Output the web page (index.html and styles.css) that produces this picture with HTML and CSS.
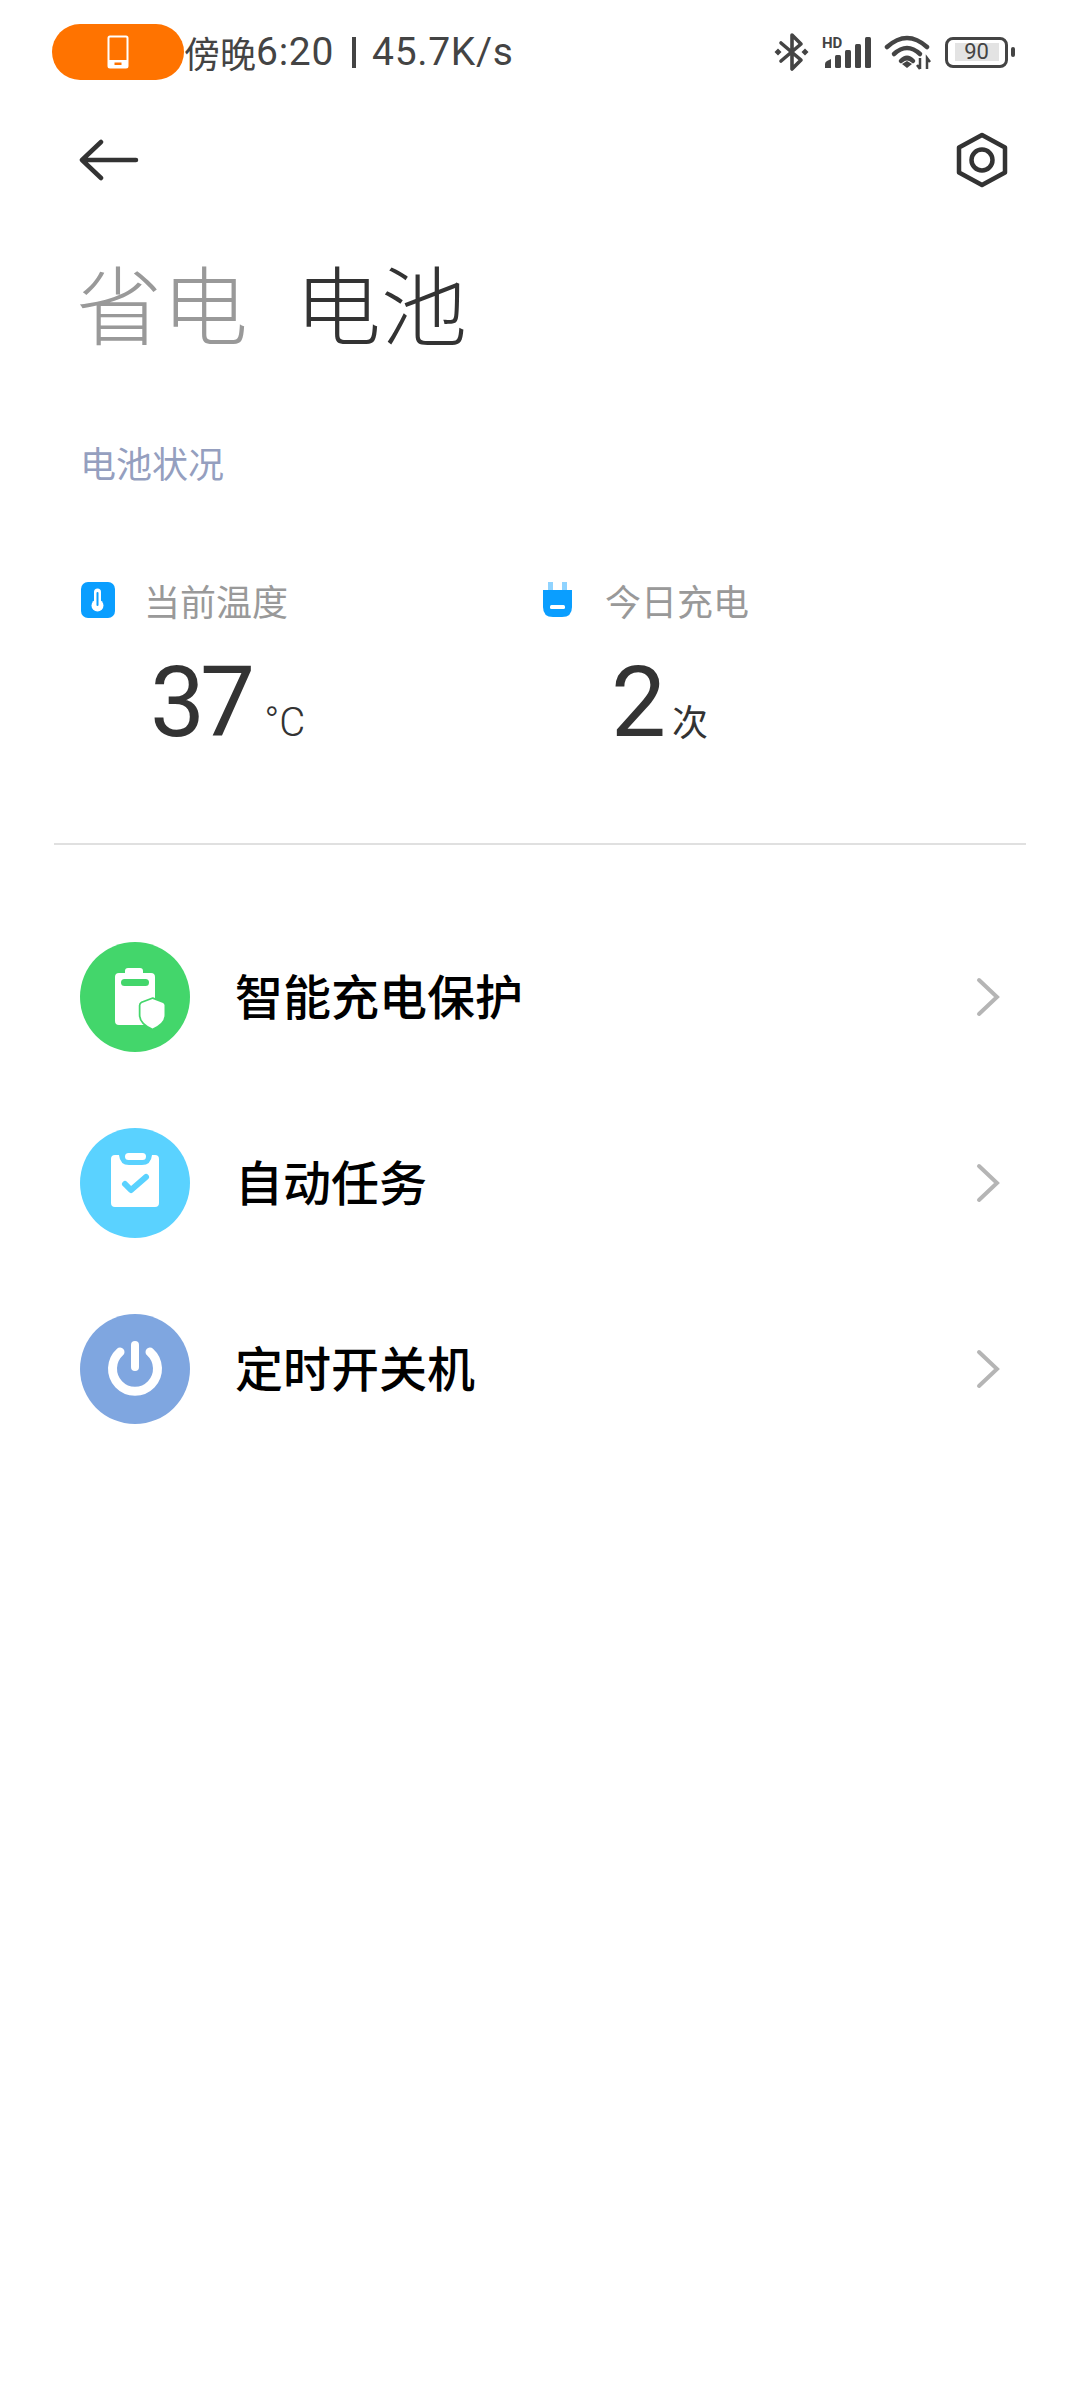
FILE: index.html
```html
<!DOCTYPE html>
<html lang="zh-CN">

<head>
    <meta charset="UTF-8">
    <meta name="viewport" content="width=device-width, initial-scale=1.0">
    <title>省电 电池</title>
    <link rel="stylesheet" href="styles.css">
</head>

<body>
    <div class="status-bar">
        <div class="call-pill">
            <svg width="22" height="34" viewBox="0 0 22 34">
                <rect x="1.5" y="1.5" width="19" height="31" rx="1.5" fill="none" stroke="#fff" stroke-width="2"/>
                <rect x="1.5" y="25" width="19" height="7.5" fill="#fff"/>
                <rect x="7.500" y="27.500" width="7" height="2.500" fill="#ff7300"/>
            </svg>
        </div>
        <div class="status-text">傍晚<span class="status-num">6:20</span><span class="status-sep"></span><span class="status-num">45.7K/s</span></div>
        <div class="status-icons">
            <svg class="icon-bt" width="36" height="40" viewBox="0 0 36 40">
                <path d="M7 11 L27 28 L18 37 V3 L27 12 L7 29" fill="none" stroke="#444" stroke-width="3.600" stroke-linejoin="round" stroke-linecap="round"/>
                <path d="M4 16.500 L7.500 20 L4 23.500 L0.500 20 Z M31 16.500 L34.500 20 L31 23.500 L27.500 20 Z" fill="#444"/>
            </svg>
            <svg class="icon-signal" width="50" height="34" viewBox="0 0 50 34">
                <text x="0" y="13" class="hd-text">HD</text>
                <path d="M3 33 V29 Q3 27 5 26 L9 24 V33 Z" fill="#444"/>
                <rect x="13" y="20" width="6" height="13" rx="1.500" fill="#444"/>
                <rect x="23" y="15" width="6" height="18" rx="1.500" fill="#444"/>
                <rect x="33" y="9" width="6" height="24" rx="1.500" fill="#444"/>
                <rect x="43" y="2" width="6" height="31" rx="1.500" fill="#444"/>
            </svg>
            <svg class="icon-wifi" width="47" height="36" viewBox="0 0 47 36">
                <path d="M3 13 Q23 -5 43 13" fill="none" stroke="#444" stroke-width="4.500" stroke-linecap="round"/>
                <path d="M10 20 Q23 8 36 20" fill="none" stroke="#444" stroke-width="4.500" stroke-linecap="round"/>
                <path d="M17 27 Q23 21 29 27" fill="none" stroke="#444" stroke-width="4.500" stroke-linecap="round"/>
                <path d="M18 30 L23 27 L28 30 L23 34 Z" fill="#444"/>
                <path d="M36 24 V35 M33 31 L36 35 M43 35 V24 L46 28" fill="none" stroke="#444" stroke-width="2.500"/>
            </svg>
            <div class="battery">
                <div class="battery-body"><span class="battery-level">90</span></div>
                <div class="battery-cap"></div>
            </div>
        </div>
    </div>

    <div class="nav">
        <svg width="60" height="42" viewBox="0 0 60 42">
            <path d="M22 3 L3 21 L22 39 M3 21 H57" fill="none" stroke="#333" stroke-width="4.500" stroke-linecap="round" stroke-linejoin="round"/>
        </svg>
        <svg width="52" height="56" viewBox="0 0 52 56">
            <path d="M26 3 L49 15.500 V40.500 L26 53 L3 40.500 V15.500 Z" fill="none" stroke="#333" stroke-width="4.500" stroke-linejoin="round"/>
            <circle cx="26" cy="28" r="10.500" fill="none" stroke="#333" stroke-width="4.500"/>
        </svg>
    </div>

    <div class="tabs">
        <span class="tab">省电</span>
        <span class="tab tab-active">电池</span>
    </div>

    <div class="section-title">电池状况</div>

    <div class="stats">
        <div class="stat">
            <div class="stat-head">
                <svg class="stat-icon" width="34" height="36" viewBox="0 0 34 36">
                    <rect width="34" height="36" rx="7" fill="#0a9eff"/>
                    <path d="M16.500 10 V22" stroke="#fff" stroke-width="7" stroke-linecap="round"/>
                    <circle cx="16.500" cy="23.500" r="6" fill="#fff"/>
                    <path d="M16.500 11 V23" stroke="#0a9eff" stroke-width="2" stroke-linecap="round"/>
                </svg>
                <span class="stat-label">当前温度</span>
            </div>
            <div class="stat-value"><span class="stat-num stat-num-tight">37</span><span class="stat-unit">°C</span></div>
        </div>
        <div class="stat">
            <div class="stat-head">
                <svg class="stat-icon" width="34" height="36" viewBox="0 0 34 36">
                    <path d="M6 0 H11 V9 H6 Z M20 0 H25 V9 H20 Z" fill="#8fd3ff"/>
                    <path d="M1 8 H30 V25 Q30 35 20 35 H11 Q1 35 1 25 Z" fill="#0a9eff"/>
                    <rect x="8" y="23" width="15" height="4" rx="1.500" fill="#fff"/>
                </svg>
                <span class="stat-label">今日充电</span>
            </div>
            <div class="stat-value"><span class="stat-num">2</span><span class="stat-unit stat-unit-cn">次</span></div>
        </div>
    </div>

    <div class="divider"></div>

    <div class="list">
        <div class="row">
            <div class="row-icon icon-green">
                <svg width="110" height="110" viewBox="0 0 110 110">
                    <path d="M45 29 Q45 26 48 26 H60 Q63 26 63 29 V31 H71 Q75 31 75 35 V79 Q75 83 71 83 H39 Q35 83 35 79 V35 Q35 31 39 31 H45 Z" fill="#fff"/>
                    <rect x="41" y="37" width="28" height="7" rx="3.500" fill="#43d66b"/>
                    <path d="M72.500 57 L83 61 Q84.500 61.800 84.500 63.500 V73 Q84.500 81 72.500 86.500 Q60.500 81 60.500 73 V63.500 Q60.500 61.800 62 61 Z" fill="#fff" stroke="#43d66b" stroke-width="3.500" paint-order="stroke"/>
                </svg>
            </div>
            <div class="row-title">智能充电保护</div>
            <svg class="chevron" width="26" height="42" viewBox="0 0 26 42"><path d="M4 4 L22 21 L4 38" fill="none" stroke="#b5b5b5" stroke-width="4" stroke-linecap="round"/></svg>
        </div>
        <div class="row">
            <div class="row-icon icon-blue">
                <svg width="110" height="110" viewBox="0 0 110 110">
                    <path d="M35 27 H39 Q40 37 49 37 H62 Q71 37 72 27 H75 Q79 27 79 31 V75 Q79 79 75 79 H35 Q31 79 31 75 V31 Q31 27 35 27 Z" fill="#fff"/>
                    <rect x="45" y="25" width="21" height="7" rx="3.500" fill="#fff"/>
                    <path d="M45 56 L51 62 L66 49" fill="none" stroke="#5ad2ff" stroke-width="6" stroke-linecap="round" stroke-linejoin="round"/>
                </svg>
            </div>
            <div class="row-title">自动任务</div>
            <svg class="chevron" width="26" height="42" viewBox="0 0 26 42"><path d="M4 4 L22 21 L4 38" fill="none" stroke="#b5b5b5" stroke-width="4" stroke-linecap="round"/></svg>
        </div>
        <div class="row">
            <div class="row-icon icon-periwinkle">
                <svg width="110" height="110" viewBox="0 0 110 110">
                    <path d="M40 38 A22.500 22.500 0 1 0 70 38" fill="none" stroke="#fff" stroke-width="9" stroke-linecap="round"/>
                    <path d="M55 31 V53" stroke="#fff" stroke-width="8" stroke-linecap="round"/>
                </svg>
            </div>
            <div class="row-title">定时开关机</div>
            <svg class="chevron" width="26" height="42" viewBox="0 0 26 42"><path d="M4 4 L22 21 L4 38" fill="none" stroke="#b5b5b5" stroke-width="4" stroke-linecap="round"/></svg>
        </div>
    </div>
</body>

</html>
```
FILE: styles.css
```css
* {
    box-sizing: border-box;
}

html,
body {
    margin: 0;
    background-color: #fff;
}

body {
    width: 1080px;
    min-height: 2400px;
    font-family: Roboto, "Noto Sans CJK SC", sans-serif;
    color: #333;
}

.status-bar {
    display: flex;
    align-items: center;
    height: 56px;
    margin-top: 24px;
    padding: 0 65px 0 52px;
}

.call-pill {
    display: flex;
    align-items: center;
    justify-content: center;
    width: 132px;
    height: 56px;
    border-radius: 28px;
    background-color: #ff7300;
    flex-shrink: 0;
}

.status-text {
    display: flex;
    align-items: center;
    font-size: 36px;
    color: #444;
    white-space: nowrap;
}

.status-num {
    font-size: 39px;
    letter-spacing: 0.7px;
}

.status-sep {
    width: 4px;
    height: 31px;
    margin: 0 16px 0 18px;
    background-color: #444;
}

.status-icons {
    display: flex;
    align-items: center;
    gap: 12px;
    margin-left: auto;
}

.hd-text {
    font-family: Roboto, sans-serif;
    font-size: 15px;
    font-weight: 700;
    fill: #444;
}

.battery {
    display: flex;
    align-items: center;
    gap: 3px;
    margin-left: 2px;
}

.battery-body {
    display: flex;
    align-items: center;
    justify-content: center;
    width: 63px;
    height: 31px;
    border: 3px solid #444;
    border-radius: 8px;
}

.battery-level {
    width: 44px;
    height: 18px;
    background-color: #e3e3e3;
    font-size: 22px;
    line-height: 18px;
    text-align: center;
    color: #444;
}

.battery-cap {
    width: 4px;
    height: 10px;
    border-radius: 2px;
    background-color: #444;
}

.nav {
    display: flex;
    align-items: center;
    justify-content: space-between;
    height: 56px;
    margin-top: 52px;
    padding: 0 72px 0 79px;
}

.tabs {
    display: flex;
    gap: 47px;
    margin-top: 68px;
    padding-left: 76px;
    font-size: 86px;
    font-weight: 300;
    line-height: 108px;
}

.tab {
    color: #999;
}

.tab-active {
    color: #333;
}

.section-title {
    margin-top: 78px;
    padding-left: 80px;
    font-size: 36px;
    line-height: 48px;
    color: #959fbf;
}

.stats {
    display: flex;
    margin-top: 90px;
    padding-left: 81px;
}

.stat {
    width: 461px;
}

.stat-head {
    display: flex;
    align-items: center;
    gap: 29px;
    height: 40px;
}

.stat-label {
    font-size: 36px;
    color: #999;
}

.stat-value {
    display: flex;
    align-items: baseline;
    margin-top: 33px;
    padding-left: 69px;
    line-height: 100px;
}

.stat-num {
    font-size: 98px;
    color: #333;
}

.stat-num-tight {
    letter-spacing: -5px;
}

.stat-unit {
    margin-left: 14px;
    font-size: 40px;
    font-weight: 300;
    color: #333;
}

.stat-unit-cn {
    font-size: 36px;
    font-weight: 400;
    margin-left: 6px;
}

.divider {
    height: 2px;
    margin: 69px 54px 0;
    background-color: #e0e0e0;
}

.list {
    margin-top: 59px;
}

.row {
    display: flex;
    align-items: center;
    height: 186px;
    padding: 0 79px 0 80px;
}

.row-icon {
    display: flex;
    align-items: center;
    justify-content: center;
    width: 110px;
    height: 110px;
    border-radius: 50%;
    flex-shrink: 0;
}

.icon-green {
    background-color: #43d66b;
}

.icon-blue {
    background-color: #5ad2ff;
}

.icon-periwinkle {
    background-color: #7fa6e0;
}

.row-title {
    margin: -6px 0 0 45px;
    font-size: 48px;
    font-weight: 500;
    color: #000;
}

.chevron {
    margin-left: auto;
}
```
